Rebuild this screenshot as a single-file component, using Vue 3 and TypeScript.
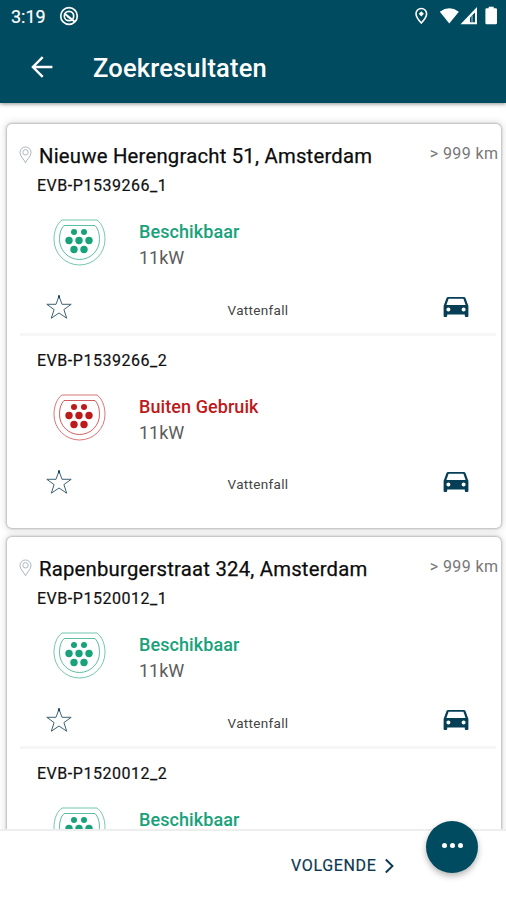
<script setup lang="ts">
interface Connector {
  id: string
  available: boolean
}
interface Station {
  address: string
  connectors: Connector[]
}

const stations: Station[] = [
  {
    address: 'Nieuwe Herengracht 51, Amsterdam',
    connectors: [
      { id: 'EVB-P1539266_1', available: true },
      { id: 'EVB-P1539266_2', available: false },
    ],
  },
  {
    address: 'Rapenburgerstraat 324, Amsterdam',
    connectors: [
      { id: 'EVB-P1520012_1', available: true },
      { id: 'EVB-P1520012_2', available: true },
    ],
  },
]

const pins: [number, number][] = [
  [21, 13], [31, 13],
  [16, 21.5], [26, 21.5], [36, 21.5],
  [21, 30.5], [31, 30.5],
]
</script>

<template>
  <div class="screen">
    <header class="top">
      <div class="status-bar">
        <span class="clock">3:19</span>
        <svg class="dnd" width="20" height="20" viewBox="0 0 20 20" fill="none" stroke="#fff">
          <circle cx="10" cy="10" r="8.3" stroke-width="1.7" />
          <circle cx="10" cy="10" r="4.7" stroke-width="1.7" />
          <path d="M5.5 7.5L15.5 15.5" stroke-width="2" />
          <path d="M8 10.2l3.2 2.6" stroke-width="1.4" />
        </svg>
        <span class="grow"></span>
        <svg class="signals" width="86" height="20" viewBox="0 0 86 20">
          <path d="M6.3 2.5a5.3 5.3 0 0 0-5.3 5.3c0 3.7 5.3 9.2 5.3 9.2s5.3-5.5 5.3-9.2a5.3 5.3 0 0 0-5.3-5.3z" fill="none" stroke="#fff" stroke-width="1.6" />
          <path d="M6.3 5.2l2.6 2.6-2.6 2.6-2.6-2.6z" fill="#fff" />
          <path d="M24.8 5.7Q34.3-1 43.8 5.7L34.3 17.5z" fill="#fff" />
          <path d="M62 1v17.3H45.5z" fill="#fff" />
          <path d="M60 6.5v9.7h-5V11.5z" fill="#004b5f" />
          <path d="M57 9.5v6.7" stroke="#fff" stroke-width=".7" />
          <path d="M73.7 2.2V.8h5v1.4h2q1.3 0 1.3 1.3v13.4q0 1.3-1.3 1.3h-9q-1.3 0-1.3-1.3V3.5q0-1.3 1.3-1.3z" fill="#fff" />
        </svg>
      </div>
      <div class="app-bar">
        <svg width="24" height="24" viewBox="0 0 24 24" fill="none" stroke="#fff" stroke-width="2.4">
          <path d="M22.4 12H3M12.7 2.2L2.9 12l9.8 9.8" />
        </svg>
        <h1>Zoekresultaten</h1>
      </div>
    </header>

    <main class="list">
      <section v-for="station in stations" :key="station.address" class="card">
        <div class="card-head">
          <svg class="pin" width="13" height="18" viewBox="0 0 13 18" fill="none" stroke="#a9b7bd" stroke-width="1">
            <path d="M6.5 1A5.4 5.4 0 0 0 1 6.5C1 10.5 5 13 6.5 16.8 8 13 12 10.5 12 6.5A5.4 5.4 0 0 0 6.5 1z" />
            <circle cx="6.5" cy="6.3" r="2.7" />
          </svg>
          <h2>{{ station.address }}</h2>
          <span class="distance">&gt; 999 km</span>
        </div>
        <article v-for="c in station.connectors" :key="c.id" class="connector" :class="{ out: !c.available }">
          <div class="cid">{{ c.id }}</div>
          <div class="info">
            <svg class="socket" width="53" height="47" viewBox="0 0 53 47">
              <g fill="none" stroke="currentColor" stroke-width="1">
                <path opacity=".6" d="M9 1H44C49 4.500 52 12 52 20.500A25.5 25.5 0 0 1 1 20.500C1 12 4 4.500 9 1z" />
                <path opacity=".7" d="M11 6.500H42C45 9.500 46.500 14 46.500 20.500A20 20 0 0 1 6.500 20.500C6.500 14 8 9.500 11 6.500z" />
              </g>
              <circle v-for="(p, i) in pins" :key="i" :cx="p[0]" :cy="p[1]" :r="i < 2 ? 3 : 3.7" fill="currentColor" />
            </svg>
            <div class="labels">
              <div class="state">{{ c.available ? 'Beschikbaar' : 'Buiten Gebruik' }}</div>
              <div class="power">11kW</div>
            </div>
          </div>
          <div class="actions">
            <svg class="star" width="28" height="26" viewBox="0 0 28 26" fill="none" stroke="#3e6275" stroke-width="1">
              <path d="M14 2l3 8.3h9.2l-7.3 5.3 2.8 8.6L14 19l-7.7 5.2 2.8-8.6-7.3-5.3H11z" />
              <path d="M14 1.2v3" stroke="#0b4258" stroke-width="1.8" />
            </svg>
            <span class="operator">Vattenfall</span>
            <svg class="car" width="26" height="22" viewBox="0 0 26 22">
              <path fill="#063f55" fill-rule="evenodd" d="M5.2 1h15.6q1.4 0 1.9 1.4L25.4 10v10q0 1-1 1h-1.6q-1 0-1-1v-1.6H4.2V20q0 1-1 1H1.6q-1 0-1-1V10L3.3 2.4Q3.8 1 5.2 1zM5.6 2.7L3.4 9h19.2L20.4 2.7zM5.4 11.6a2 2 0 1 0 0 4 2 2 0 0 0 0-4zM20.6 11.6a2 2 0 1 0 0 4 2 2 0 0 0 0-4z" />
            </svg>
          </div>
        </article>
      </section>
    </main>

    <footer class="bottom">
      <button class="next">
        <span>VOLGENDE</span>
        <svg width="11" height="16" viewBox="0 0 11 16" fill="none" stroke="#0b3852" stroke-width="1.9">
          <path d="M1.8 1.5L8.5 8l-6.7 6.5" />
        </svg>
      </button>
      <button class="fab" aria-label="Menu"><i></i><i></i><i></i></button>
    </footer>
  </div>
</template>

<style>
body {
  margin: 0;
  background: #fff;
}
</style>

<style scoped>
.screen {
  display: flex;
  flex-direction: column;
  width: 506px;
  height: 900px;
  overflow: hidden;
  background: #fff;
  font-family: Roboto, sans-serif;
  color: #0c0c0c;
}
h1, h2 {
  margin: 0;
}
svg {
  display: block;
  flex: none;
}
.top {
  position: relative;
  flex: none;
  height: 103px;
  box-sizing: border-box;
  background: #004b5f;
  color: #fff;
  box-shadow: 0 1px 4px rgba(0, 0, 0, 0.45);
}
.status-bar {
  display: flex;
  align-items: center;
  height: 32px;
  padding: 0 5px 0 11px;
}
.clock {
  width: 48px;
  padding-top: 1px;
  font-size: 18px;
  line-height: 32px;
  -webkit-text-stroke: 0.2px currentColor;
}
.grow {
  flex: 1;
}
.signals {
  margin-top: -1px;
}
.app-bar {
  display: flex;
  align-items: center;
  gap: 39px;
  height: 70px;
  padding-left: 30px;
}
h1 {
  padding-top: 2px;
  font-size: 25.5px;
  font-weight: 500;
  line-height: 30px;
  letter-spacing: 0.18px;
}
.list {
  flex: 1;
  min-height: 0;
  overflow: hidden;
  display: flex;
  flex-direction: column;
  gap: 9px;
  padding: 21px 5px 0 7px;
}
.card {
  flex: none;
  height: 404px;
  box-sizing: border-box;
  padding-top: 16px;
  border-radius: 5px;
  background: #fff;
  box-shadow: 0 0 2px 1px rgba(0, 0, 0, 0.2), 0 0 7px 2px rgba(0, 0, 0, 0.12);
}
.card-head {
  display: flex;
  align-items: center;
  height: 30px;
  padding: 0 3px 0 12px;
}
.pin {
  margin-right: 7px;
}
h2 {
  flex: 1;
  padding-top: 1px;
  font-size: 20.3px;
  font-weight: 400;
  line-height: 24px;
  letter-spacing: 0.22px;
  white-space: nowrap;
  -webkit-text-stroke: 0.25px currentColor;
}
.distance {
  margin-top: -4px;
  margin-right: -0.4px;
  font-size: 16px;
  letter-spacing: 0.4px;
  color: #777;
  white-space: nowrap;
}
.connector {
  height: 174.5px;
  box-sizing: border-box;
  padding-top: 6px;
  color: #17a27a;
}
.connector.out {
  color: #bd1b1b;
}
.cid {
  padding-left: 30px;
  font-size: 16px;
  line-height: 20px;
  letter-spacing: 0.53px;
  color: #111;
  -webkit-text-stroke: 0.2px currentColor;
}
.info {
  display: flex;
  align-items: flex-start;
  gap: 33px;
  height: 49px;
  margin-top: 23px;
  padding-left: 46px;
}
.state {
  font-size: 18px;
  font-weight: 500;
  line-height: 26px;
  letter-spacing: 0.08px;
}
.power {
  font-size: 18px;
  line-height: 26px;
  color: #5c5c5c;
}
.actions {
  display: flex;
  align-items: center;
  justify-content: space-between;
  height: 40px;
  margin: 18px 5px 0 13px;
  padding: 0 27px 7px 25px;
  border-bottom: 3px solid #f6f6f6;
}
.actions .star,
.actions .car {
  margin-top: 2px;
}
.connector:last-child .actions {
  border-bottom-color: transparent;
}
.operator {
  margin-top: 7px;
  font-size: 13.5px;
  letter-spacing: 0.32px;
  color: #444;
}
.bottom {
  position: relative;
  flex: none;
  display: flex;
  height: 71px;
  box-sizing: border-box;
  border-top: 2px solid #eee;
  background: #fff;
}
button {
  padding: 0;
  border: 0;
  background: none;
  font-family: inherit;
}
.next {
  display: flex;
  align-items: center;
  gap: 8px;
  height: 68px;
  margin-left: 291px;
  padding-top: 1px;
  font-size: 16px;
  letter-spacing: 0.65px;
  color: #0b3852;
  -webkit-text-stroke: 0.2px currentColor;
}
.fab {
  position: absolute;
  top: -10px;
  left: 426px;
  display: flex;
  align-items: center;
  justify-content: center;
  gap: 3px;
  width: 52px;
  height: 52px;
  padding-bottom: 4px;
  border-radius: 50%;
  background: #004b5f;
  box-shadow: 0 3px 6px rgba(0, 0, 0, 0.3);
}
.fab i {
  width: 5px;
  height: 5px;
  border-radius: 50%;
  background: #fff;
}
</style>
